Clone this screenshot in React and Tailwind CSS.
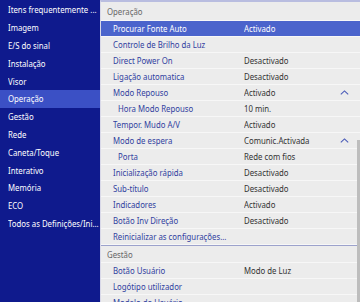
import React from "react";

const side = [
  "Itens frequentemente ...",
  "Imagem",
  "E/S do sinal",
  "Instalação",
  "Visor",
  "Operação",
  "Gestão",
  "Rede",
  "Caneta/Toque",
  "Interativo",
  "Memória",
  "ECO",
  "Todos as Definições/Ini...",
];

const rows = [
  { l: "Procurar Fonte Auto", v: "Activado", sel: true },
  { l: "Controle de Brilho da Luz", v: "" },
  { l: "Direct Power On", v: "Desactivado" },
  { l: "Ligação automatica", v: "Desactivado" },
  { l: "Modo Repouso", v: "Activado", up: true },
  { l: "Hora Modo Repouso", v: "10 min.", ind: true },
  { l: "Tempor. Mudo A/V", v: "Activado" },
  { l: "Modo de espera", v: "Comunic.Activada", up: true },
  { l: "Porta", v: "Rede com fios", ind: true },
  { l: "Inicialização rápida", v: "Desactivado" },
  { l: "Sub-título", v: "Desactivado" },
  { l: "Indicadores", v: "Activado" },
  { l: "Botão Inv Direção", v: "Desactivado" },
  { l: "Reinicializar as configurações...", v: "" },
];

const rows2 = [
  { l: "Botão Usuário", v: "Modo de Luz" },
  { l: "Logótipo utilizador", v: "" },
  { l: "Modelo do Usuário", v: "" },
];

function T({ children, className = "" }) {
  return (
    <span className={`block origin-left scale-x-[0.82] whitespace-nowrap text-[9.5px] leading-[11px] ${className}`}>
      {children}
    </span>
  );
}

function Chevron() {
  return (
    <svg width="9" height="5" viewBox="0 0 9 5" className="absolute right-[11px] top-[5px]">
      <path d="M0.8 4.4 L4.5 0.9 L8.2 4.4" fill="none" stroke="#4a5bb8" strokeWidth="1.1" />
    </svg>
  );
}

function Row({ r }) {
  return (
    <div
      className={`relative flex h-[16px] shrink-0 items-center border-b border-[#f7f7f7] ${
        r.sel ? "bg-[#4b64cc]" : ""
      }`}
    >
      <div className={`${r.ind ? "pl-[17px]" : "pl-[12px]"} flex w-[143px] shrink-0 items-center overflow-hidden`}>
        <T className={r.sel ? "text-white" : "text-[#3040a0]"}>{r.l}</T>
      </div>
      <div className="flex items-center overflow-hidden">
        <T className={r.sel ? "text-white" : "text-[#333]"}>{r.v}</T>
      </div>
      {r.up && <Chevron />}
    </div>
  );
}

export default function App() {
  return (
    <div
      className="flex h-[302px] w-[360px] overflow-hidden bg-white"
      style={{ fontFamily: '"Noto Sans", "Open Sans", sans-serif' }}
    >
      <div className="flex w-[100px] shrink-0 flex-col overflow-hidden bg-[#0f1a8d] pt-[1px]">
        {side.map((s, i) => (
          <div
            key={i}
            className={`flex h-[17.8px] shrink-0 items-center pl-[8px] ${s === "Operação" ? "bg-[#3b50c5]" : ""}`}
          >
            <T className="text-white">{s}</T>
          </div>
        ))}
      </div>
      <div className="relative flex flex-1 flex-col overflow-hidden border-l border-t-2 border-l-[#d8d8e8] border-t-[#b9bde0] bg-[#ececec]">
        <div className="flex h-[19px] shrink-0 items-center border-b border-[#f7f7f7] pl-[6px]">
          <T className="text-[#666]">Operação</T>
        </div>
        {rows.map((r, i) => (
          <Row key={i} r={r} />
        ))}
        <div className="h-[1px] shrink-0 bg-[#9ca2cc]" />
        <div className="flex h-[17px] shrink-0 items-center border-b border-[#f7f7f7] pl-[6px]">
          <T className="text-[#666]">Gestão</T>
        </div>
        {rows2.map((r, i) => (
          <Row key={i} r={r} />
        ))}
        <div className="absolute right-0 top-[138px] h-[200px] w-[3px] bg-[#bdbdbd]" />
      </div>
    </div>
  );
}
